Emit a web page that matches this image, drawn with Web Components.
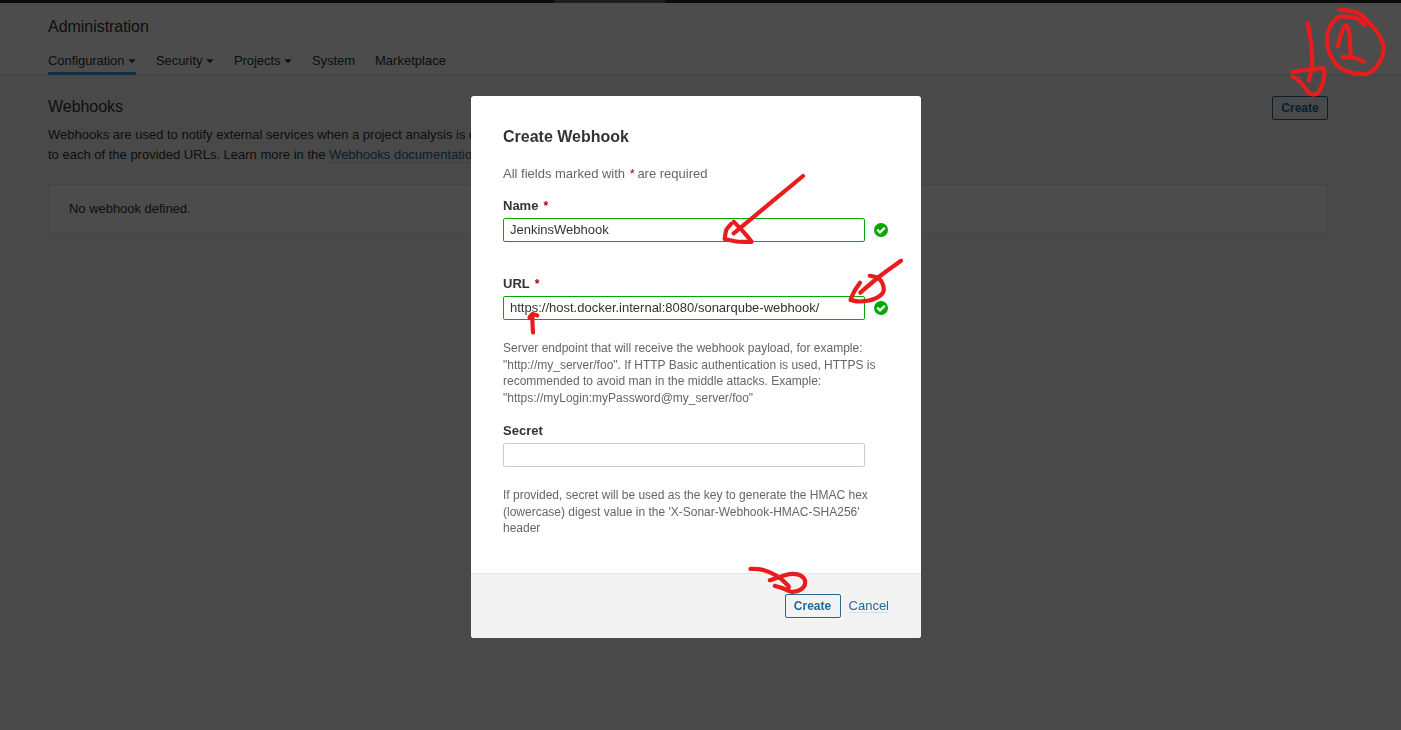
<!DOCTYPE html>
<html lang="en">
<head>
<meta charset="utf-8">
<title>Webhooks - Administration</title>
<style>
html,body{margin:0;height:100%}
body{font:13px/20px "Liberation Sans",Arial,sans-serif;color:#333;background:#f3f3f3;overflow:hidden}
</style>
</head>
<body>
<admin-page></admin-page>
<modal-layer>
  <webhook-modal heading="Create Webhook">
    <form-field label="Name" required valid value="JenkinsWebhook" style="height:78px"></form-field>
    <form-field label="URL" required valid value="https://host.docker.internal:8080/sonarqube-webhook/" style="height:147px">
      <div>Server endpoint that will receive the webhook payload, for example:</div>
      <div>"http://my_server/foo". If HTTP Basic authentication is used, HTTPS is</div>
      <div>recommended to avoid man in the middle attacks. Example:</div>
      <div>"https://myLogin:myPassword@my_server/foo"</div>
    </form-field>
    <form-field label="Secret" value="">
      <div>If provided, secret will be used as the key to generate the HMAC hex</div>
      <div>(lowercase) digest value in the 'X-Sonar-Webhook-HMAC-SHA256'</div>
      <div>header</div>
    </form-field>
  </webhook-modal>
</modal-layer>
<pen-marks></pen-marks>
<script>
function define(name, html, setup){
  customElements.define(name, class extends HTMLElement{
    constructor(){
      super();
      this.attachShadow({mode:'open'}).innerHTML = html;
    }
    connectedCallback(){ if(setup) setup(this, this.shadowRoot); }
  });
}

define('action-button', `<style>
:host{display:block;box-sizing:border-box;width:56px;height:24px;border:1px solid #236a97;border-radius:2px;color:#236a97;font:600 12px/22px "Liberation Sans",Arial,sans-serif;text-align:center}
</style><slot></slot>`);

define('nav-tab', `<style>
:host{display:flex;align-items:center;justify-content:space-between;box-sizing:border-box;height:25px;border-bottom:3px solid transparent;white-space:nowrap;letter-spacing:-.07px}
:host([active]){border-color:#4b9fd5}
svg{display:none}
:host([menu]) svg{display:block}
</style><slot></slot><svg width="8" height="5" viewBox="0 0 8 5"><path d="M.3.2h7.4L4 4.3z" fill="#333"/></svg>`);

define('admin-page', `<style>
:host{display:flex;flex-direction:column;height:100vh}
.top{display:flex;height:3px;background:#262626;flex:none}
.top i{width:111px;margin-left:554px;background:#6a6a6a}
header{box-sizing:border-box;height:72px;background:#fff;border-bottom:1px solid #e6e6e6;padding:14px 48px 0;flex:none}
h1,h2{font-size:16px;line-height:20px;font-weight:400;margin:0}
h1{letter-spacing:-.04px}
h2{padding-top:1px;letter-spacing:-.04px}
nav{display:flex;gap:20px;padding-top:13px}
main{padding:21px 73px 0 48px}
.head{display:flex;justify-content:space-between;height:29px}
p{margin:0;white-space:nowrap}
a{color:#236a97;border-bottom:1px solid #cae3f2}
.panel{box-sizing:border-box;height:50px;margin-top:19px;padding:14px 20px;background:#fff;border:1px solid #e6e6e6;letter-spacing:-.03px}
</style>
<div class="top"><i></i></div>
<header><h1>Administration</h1>
<nav><nav-tab active menu style="width:88px">Configuration</nav-tab><nav-tab menu style="width:58px">Security</nav-tab><nav-tab menu style="width:58px">Projects</nav-tab><nav-tab style="width:43px">System</nav-tab><nav-tab style="letter-spacing:.01px">Marketplace</nav-tab></nav></header>
<main><div class="head"><h2>Webhooks</h2><action-button>Create</action-button></div>
<p>Webhooks are used to notify external services when a project analysis is done.</p>
<p>to each of the provided URLs. Learn more in the <a>Webhooks documentation</a>.</p>
<div class="panel">No webhook defined.</div></main>`);

define('modal-layer', `<style>
:host{position:fixed;inset:0;box-sizing:border-box;padding:96px 9px 0 0;display:flex;justify-content:center;align-items:flex-start;background:rgba(0,0,0,.7)}
</style><slot></slot>`);

define('webhook-modal', `<style>
:host{display:flex;flex-direction:column;width:450px;height:542px;background:#fff;border-radius:3px;overflow:hidden}
.body{flex:1;padding:31px 32px 0}
h2{margin:0;font-size:16px;line-height:20px;font-weight:700}
.note{color:#666;padding:17px 0 12px}
.note b{font-weight:400;color:#a4030f;margin:0 -1px 0 1px}
footer{box-sizing:border-box;height:65px;border-top:1px solid #e6e6e6;background:#f3f3f3;display:flex;justify-content:flex-end;gap:8px;padding:20px 32px 0}
a{height:18px;line-height:24px;color:#236a97;border-bottom:1px solid #cae3f2;align-self:flex-start}
</style>
<div class="body"><h2></h2><div class="note">All fields marked with <b>*</b> are required</div><slot></slot></div>
<footer><action-button>Create</action-button><a>Cancel</a></footer>`,
(el, root)=>{ root.querySelector('h2').textContent = el.getAttribute('heading'); });

define('form-field', `<style>
:host{display:block}
label{display:block;font-weight:700;height:22px;line-height:20px}
label b{color:#a4030f;margin-left:5px;font-size:12px}
.row{display:flex;align-items:center;gap:9px}
.box{box-sizing:border-box;width:362px;height:24px;border:1px solid #ccc;border-radius:2px;padding:0 6px;line-height:22px;background:#fff;white-space:nowrap}
:host([valid]) .box{border-color:#0a0}
svg{display:none}
:host([valid]) svg{display:block}
.help{padding-top:20px;font-size:12px;line-height:16.6px;color:#666;white-space:nowrap}
</style>
<label></label>
<div class="row"><div class="box"></div><svg width="14" height="14" viewBox="0 0 14 14"><circle cx="7" cy="7" r="7" fill="#0a0"/><path d="M3.2 6.7 6 9.4 10.8 4.7" fill="none" stroke="#fff" stroke-width="2.3"/></svg></div>
<div class="help"><slot></slot></div>`,
(el, root)=>{
  root.querySelector('label').innerHTML = el.getAttribute('label') + (el.hasAttribute('required') ? '<b>*</b>' : '');
  root.querySelector('.box').textContent = el.getAttribute('value');
});

// Freehand strokes: each list of points is joined by a smooth curve.
const strokes = [
  [[1307.7,23.3],[1311.3,45],[1312,66],[1308.7,80.5]],
  [[1292.5,72],[1305,70],[1318,68.8],[1324,69.3],[1323,82],[1317.5,93],[1310,93.5],[1301.7,84],[1297,79],[1292.5,76.7]],
  [[1338,46.3],[1341,34],[1345.7,25.3],[1349.5,34],[1350.7,57.5]],
  [[1342.5,57],[1355,58],[1363.5,61.7]],
  [[1365,25],[1356.7,18.5],[1345,16.7],[1336.7,18],[1328.5,30.7],[1327.5,45.7],[1335,63],[1348.3,71.7],[1368.3,73.3],[1379.5,62.3],[1383.5,47.3],[1378.3,34],[1366,19.5],[1356.7,12.5],[1339.5,9.8]],
  [[803,176],[733.7,233.3]],
  [[731,224],[726.3,230],[724.8,238.5]],
  [[724.8,239],[736.7,241.5],[751.5,241.8]],
  [[751.5,241.5],[743.3,231.7],[733.7,221.7]],
  [[901,260.8],[880,276],[860.3,292.7]],
  [[860,282.7],[854,292],[850.7,299.5]],
  [[850.7,300],[860,301.5],[873.3,299.3],[883,292.5],[882.3,283],[876.7,277.3],[869.7,275.8]],
  [[533,332.5],[532.4,321],[532.6,314]],
  [[529.5,317.5],[532.6,314.3],[537.2,315.5]],
  [[750.5,568.8],[761.7,569.6],[776.7,575.8],[788,585.5],[788,588.5]],
  [[774.8,585.8],[782,588],[791.7,591.8],[801.2,589.3],[805.2,582],[800.7,575.5],[793,573.8],[785,575.2],[769.8,580.2]]
];
function smooth(p){
  let d = 'M' + p[0];
  for(let i = 0; i < p.length - 1; i++){
    const a = p[i-1] || p[i], b = p[i], c = p[i+1], e = p[i+2] || c;
    d += 'C' + [b[0]+(c[0]-a[0])/6, b[1]+(c[1]-a[1])/6, c[0]-(e[0]-b[0])/6, c[1]-(e[1]-b[1])/6, c[0], c[1]].join(' ');
  }
  return d;
}
define('pen-marks', `<style>
:host{position:fixed;inset:0;pointer-events:none}
svg{display:block}
</style>
<svg width="1401" height="730" viewBox="0 0 1401 730" fill="none" stroke="#e81c1c" stroke-width="4.2" stroke-linecap="round" stroke-linejoin="round">${strokes.map(s => `<path d="${smooth(s)}"/>`).join('')}</svg>`);
</script>
</body>
</html>
